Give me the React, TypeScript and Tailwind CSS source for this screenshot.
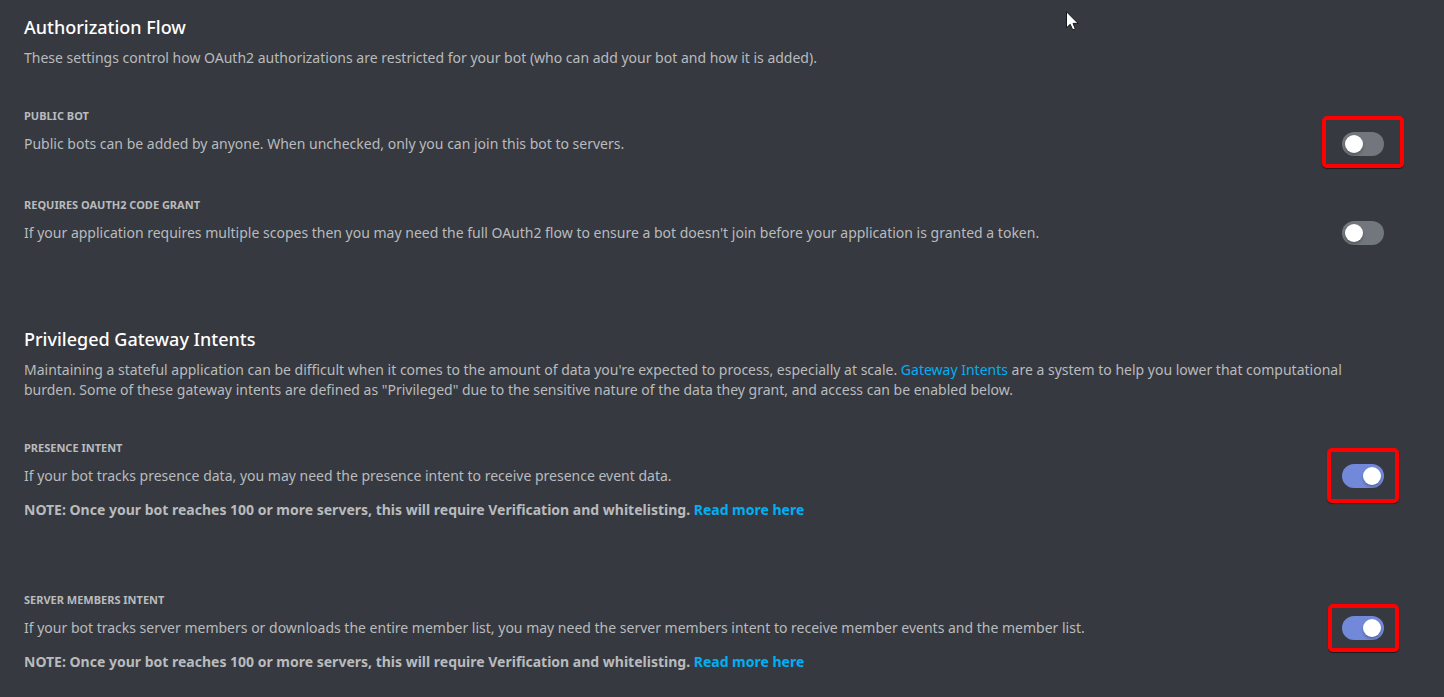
import { useState, type ReactNode } from "react";

type Highlight = "wide" | "tall" | "short";

const highlightInsets: Record<Highlight, string> = {
  wide: "-inset-x-5 -top-4 -bottom-3",
  tall: "-inset-x-[15px] -top-4 -bottom-[15px]",
  short: "-left-[14px] -right-[15px] -top-3 -bottom-3",
};

type SettingProps = {
  id: string;
  title: string;
  description: string;
  initial?: boolean;
  highlight?: Highlight;
  children?: ReactNode;
};

function Setting({ id, title, description, initial = false, highlight, children }: SettingProps) {
  const [on, setOn] = useState(initial);
  return (
    <div>
      <label htmlFor={id} className="block text-[11px] leading-4 font-bold uppercase">
        {title}
      </label>
      <div className="mt-2 flex min-h-6 items-center justify-between gap-6">
        <p id={`${id}-description`}>{description}</p>
        <span className="relative flex h-6 w-[42px] shrink-0">
          <input
            id={id}
            type="checkbox"
            role="switch"
            aria-describedby={`${id}-description`}
            checked={on}
            onChange={(event) => setOn(event.target.checked)}
            className="h-6 w-[42px] cursor-pointer appearance-none rounded-full bg-[#72767d] p-[3px] transition-colors before:block before:size-[18px] before:rounded-full before:bg-white before:shadow-[0_2px_3px_rgba(0,0,0,0.25)] before:transition-transform before:content-[''] checked:bg-[#7289da] checked:before:translate-x-[18px]"
          />
          {highlight && (
            <span
              aria-hidden="true"
              className={`pointer-events-none absolute rounded-[5px] border-4 border-[#fe0000] shadow-[0_1px_1px_rgba(0,0,0,0.5)] ${highlightInsets[highlight]}`}
            />
          )}
        </span>
      </div>
      {children}
    </div>
  );
}

function VerificationNote() {
  return (
    <p className="mt-3 font-bold">
      NOTE: Once your bot reaches 100 or more servers, this will require Verification and
      whitelisting.{" "}
      <a href="#verification" className="text-[#00aff4] hover:underline">
        Read more here
      </a>
    </p>
  );
}

function SectionHeading({ children }: { children: ReactNode }) {
  return <h2 className="mb-[10px] text-lg leading-[22px] font-medium text-white">{children}</h2>;
}

function Cursor() {
  return (
    <svg
      aria-hidden="true"
      viewBox="0 0 13 20"
      className="pointer-events-none absolute top-[11px] left-[1066px] h-5 w-[13px]"
    >
      <path
        d="M.5 .8v16l3.7-3.5 2.5 5.5 2.6-1.1-2.3-5.3h5.1z"
        fill="#fff"
        stroke="#111722"
        strokeWidth="1"
      />
    </svg>
  );
}

export default function App() {
  return (
    <main className="relative min-h-screen bg-[#36393f] pt-4 pr-[60px] pb-6 pl-6 font-['Noto_Sans',sans-serif] text-sm leading-5 text-[#b9bbbe]">
      <section>
        <SectionHeading>Authorization Flow</SectionHeading>
        <p>
          These settings control how OAuth2 authorizations are restricted for your bot (who can add
          your bot and how it is added).
        </p>
        <div className="mt-10 flex flex-col gap-[41px]">
          <Setting
            id="public-bot"
            title="Public Bot"
            description="Public bots can be added by anyone. When unchecked, only you can join this bot to servers."
            highlight="wide"
          />
          <Setting
            id="code-grant"
            title="Requires OAuth2 Code Grant"
            description="If your application requires multiple scopes then you may need the full OAuth2 flow to ensure a bot doesn't join before your application is granted a token."
          />
        </div>
      </section>

      <section className="mt-[83px]">
        <SectionHeading>Privileged Gateway Intents</SectionHeading>
        <p>
          Maintaining a stateful application can be difficult when it comes to the amount of data
          you're expected to process, especially at scale.{" "}
          <a href="#gateway-intents" className="text-[#00aff4] hover:underline">
            Gateway Intents
          </a>{" "}
          are a system to help you lower that computational burden. Some of these gateway intents
          are defined as "Privileged" due to the sensitive nature of the data they grant, and access
          can be enabled below.
        </p>
        <div className="mt-10 flex flex-col gap-[72px]">
          <Setting
            id="presence-intent"
            title="Presence Intent"
            description="If your bot tracks presence data, you may need the presence intent to receive presence event data."
            initial
            highlight="tall"
          >
            <VerificationNote />
          </Setting>
          <Setting
            id="members-intent"
            title="Server Members Intent"
            description="If your bot tracks server members or downloads the entire member list, you may need the server members intent to receive member events and the member list."
            initial
            highlight="short"
          >
            <VerificationNote />
          </Setting>
        </div>
      </section>
      <Cursor />
    </main>
  );
}
